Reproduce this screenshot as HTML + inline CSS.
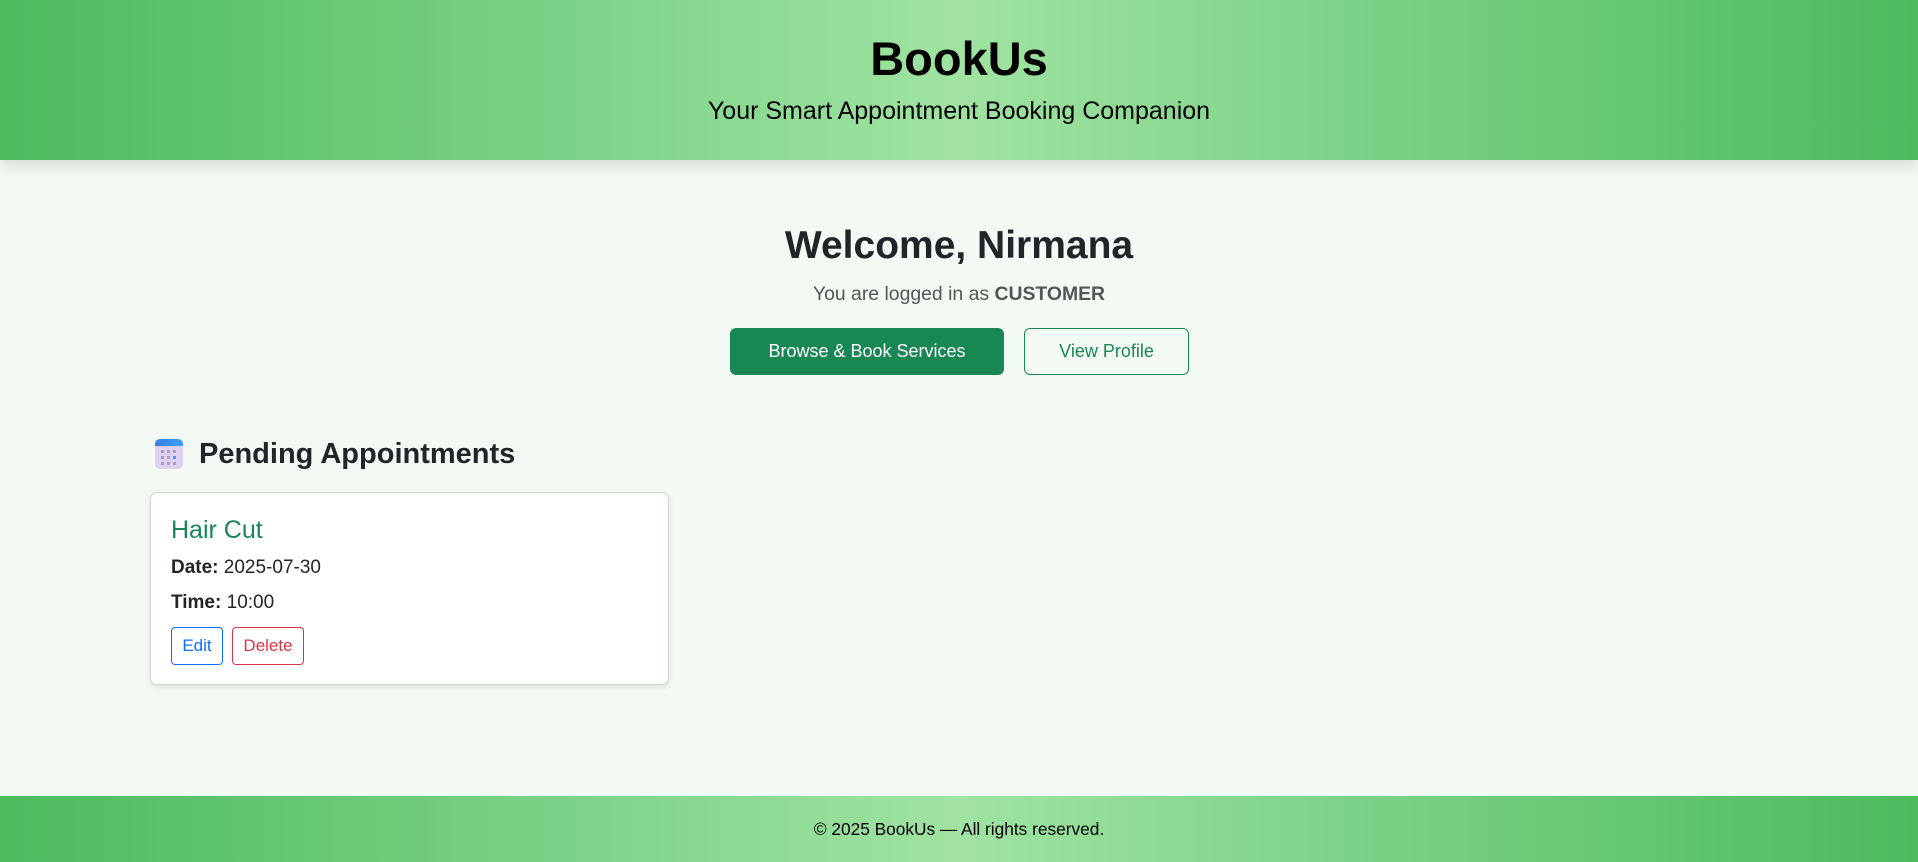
<!DOCTYPE html>
<html><head><meta charset="utf-8"><style>
*{box-sizing:border-box;margin:0;padding:0}
html,body{width:1918px;height:862px;overflow:hidden}
body{background:#f3faf4;font-family:"Liberation Sans",sans-serif;color:#212529;position:relative}
.grad{background:linear-gradient(90deg,#4cbb5c 0%,#7ad185 28%,#a0e3a2 50%,#7ad185 72%,#4cbb5c 100%)}
header{position:absolute;left:0;top:0;width:1918px;height:160px;box-shadow:0 6px 16px rgba(0,0,0,.12);text-align:center;color:#000}
header h1{position:absolute;left:0;right:0;top:27px;font-size:47px;font-weight:bold;line-height:64px}
header p{position:absolute;left:0;right:0;top:96px;font-size:25px;line-height:30px}
.welcome{position:absolute;left:0;right:0;top:222px;text-align:center;font-size:39px;font-weight:bold;line-height:48px}
.logged{position:absolute;left:0;right:0;top:282px;text-align:center;font-size:19.4px;color:#555;line-height:24px}
.btn{position:absolute;top:328px;height:47px;border-radius:6px;font-size:18px;line-height:45px;text-align:center}
.b1{left:730px;width:274px;background:#198754;color:#fff;border:1px solid #198754}
.b2{left:1024px;width:165px;color:#198754;border:1px solid #198754}
.sec{position:absolute;left:199px;top:434px;font-size:29px;font-weight:bold;line-height:40px}
.icon{position:absolute;left:155px;top:439px;width:28px;height:30px;border-radius:5px;background:#ddd0f0;overflow:hidden}
.icon::before{content:"";position:absolute;left:0;top:0;right:0;height:7px;background:linear-gradient(90deg,#3b7de8,#3aa0f0)}
.card{position:absolute;left:150px;top:492px;width:519px;height:193px;background:#fff;border:1px solid #d6d6d6;border-radius:7px;box-shadow:0 2px 6px rgba(0,0,0,.1)}
.card h3{position:absolute;left:20px;top:20px;font-size:25px;font-weight:normal;color:#198754;line-height:34px}
.card p{position:absolute;left:20px;font-size:19px;line-height:24px}
.sb{position:absolute;top:134px;height:38px;border-radius:4px;font-size:17px;line-height:36px;text-align:center;background:#fff}
footer{position:absolute;left:0;top:796px;width:1918px;height:66px;text-align:center;font-size:17.3px;line-height:66px;color:#000}
</style></head><body>
<header class="grad"><h1>BookUs</h1><p>Your Smart Appointment Booking Companion</p></header>
<div class="welcome">Welcome, Nirmana</div>
<div class="logged">You are logged in as <b>CUSTOMER</b></div>
<div class="btn b1">Browse &amp; Book Services</div>
<div class="btn b2">View Profile</div>
<div class="icon"><svg width="28" height="30" style="position:absolute;left:0;top:0"><g fill="#a99bc6"><rect x="6" y="11" width="3" height="3"/><rect x="12" y="11" width="3" height="3"/><rect x="18" y="11" width="3" height="3"/><rect x="6" y="17" width="3" height="3"/><rect x="12" y="17" width="3" height="3"/><rect x="18" y="17" width="3" height="3" fill="#3aa0f0"/><rect x="6" y="23" width="3" height="3"/><rect x="12" y="23" width="3" height="3"/><rect x="18" y="23" width="3" height="3"/></g></svg></div>
<div class="sec">Pending Appointments</div>
<div class="card">
<h3>Hair Cut</h3>
<p style="top:63px"><b>Date:</b> 2025-07-30</p>
<p style="top:98px"><b>Time:</b> 10:00</p>
<div class="sb" style="left:20px;width:52px;color:#0d6efd;border:1px solid #0d6efd">Edit</div>
<div class="sb" style="left:81px;width:72px;color:#dc3545;border:1px solid #dc3545">Delete</div>
</div>
<footer class="grad">© 2025 BookUs — All rights reserved.</footer>
</body></html>
